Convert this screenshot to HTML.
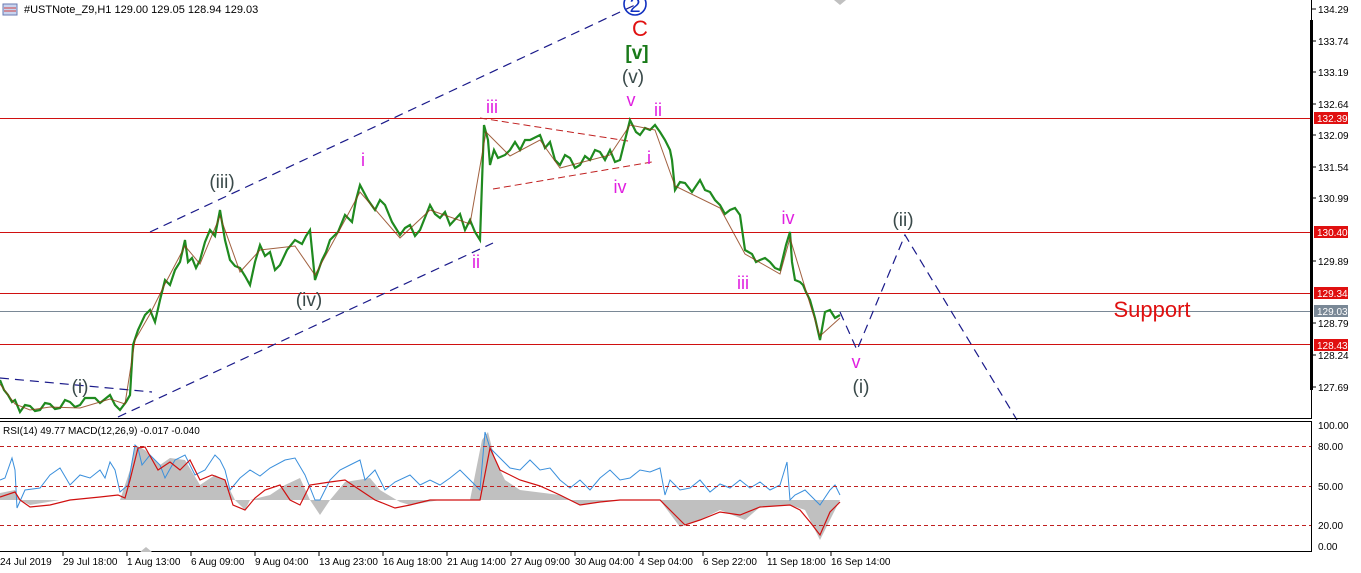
<!DOCTYPE html>
<html><head><meta charset="utf-8"><style>
body{margin:0;background:#fff;width:1361px;height:573px;overflow:hidden;font-family:"Liberation Sans",sans-serif}
svg{display:block}
text{font-family:"Liberation Sans",sans-serif}
</style></head><body>
<svg width="1361" height="573" viewBox="0 0 1361 573">
<rect width="1361" height="573" fill="#fff"/>
<rect x="3" y="4" width="14" height="11" fill="#c8d4f0" stroke="#6a7ab0"/>
<line x1="4" y1="8" x2="16" y2="8" stroke="#d04040"/><line x1="4" y1="11" x2="16" y2="11" stroke="#d04040"/>
<text x="24" y="13" font-size="11" fill="#000">#USTNote_Z9,H1  129.00 129.05 128.94 129.03</text>

<line x1="0" y1="118.5" x2="1311" y2="118.5" stroke="#d01010"/>
<line x1="0" y1="232.5" x2="1311" y2="232.5" stroke="#d01010"/>
<line x1="0" y1="293.5" x2="1311" y2="293.5" stroke="#d01010"/>
<line x1="0" y1="311.5" x2="1311" y2="311.5" stroke="#7a8896"/>
<line x1="0" y1="344.5" x2="1311" y2="344.5" stroke="#d01010"/>

<g stroke="#1a1a8a" stroke-width="1.2" stroke-dasharray="9,6" fill="none">
<line x1="150" y1="232" x2="635" y2="5"/>
<line x1="118" y1="417" x2="493" y2="243"/>
<line x1="0" y1="378" x2="152" y2="392"/>
<polyline points="840,312 857,350 905,235 1017,420"/>
</g>
<g stroke="#c02020" stroke-width="1" stroke-dasharray="7,4" fill="none">
<line x1="480" y1="118" x2="628" y2="141"/>
<line x1="493" y1="189" x2="652" y2="162"/>
</g>

<polyline fill="none" stroke="#1f8a1f" stroke-width="2.2" points="0,380 4,390 8,395 12,402 15,400 20,412 25,405 30,406 35,411 40,410 45,403 50,404 55,409 60,408 65,400 70,402 75,407 80,405 85,398 95,398 100,403 110,395 115,405 120,410 126,402 130,395 133,345 138,330 145,315 150,310 155,322 160,300 165,280 170,285 175,270 180,262 185,240 188,262 192,258 196,268 200,260 205,242 210,230 215,236 220,210 225,240 230,260 235,266 240,268 245,276 250,285 255,262 260,245 265,256 270,252 275,270 280,265 287,250 295,240 302,244 306,236 310,230 315,280 322,260 326,252 330,240 338,232 345,215 352,222 356,200 360,185 368,200 375,210 380,200 385,205 392,222 400,235 405,228 410,225 415,236 420,230 430,205 435,214 440,218 445,212 450,225 460,214 465,230 470,220 475,232 480,240 484,125 488,140 490,165 494,150 498,158 505,155 510,150 515,142 520,150 525,140 530,140 540,135 545,148 550,142 555,160 560,165 565,155 570,158 575,168 580,165 585,156 590,160 595,150 600,152 605,160 610,150 615,162 620,160 625,140 630,120 636,132 640,135 645,128 650,130 655,125 660,132 665,140 670,150 672,160 675,190 680,182 685,183 692,192 700,180 705,190 710,192 715,200 720,205 725,214 730,210 735,208 740,215 745,250 752,254 756,262 760,260 765,258 770,262 775,268 780,270 786,245 790,232 792,262 795,280 800,282 803,285 806,292 810,300 815,318 820,340 825,312 830,310 835,318 840,315"/>
<polyline fill="none" stroke="#8a3a10" stroke-width="1" opacity="0.8" points="0,384 15,404 30,410 50,407 80,408 110,399 125,404 135,340 150,314 165,284 185,246 200,264 220,216 240,272 260,250 295,246 315,275 345,220 360,192 400,238 430,210 470,224 486,132 510,156 540,140 560,168 610,155 630,125 655,130 675,186 720,208 745,254 780,274 790,238 810,304 820,336 840,318"/>

<g font-size="19" fill="#3a4a4a" text-anchor="middle">
<text x="222" y="188">(iii)</text>
<text x="309" y="306">(iv)</text>
<text x="80" y="393">(i)</text>
<text x="633" y="83">(v)</text>
<text x="903" y="226">(ii)</text>
<text x="861" y="393">(i)</text>
</g>
<g font-size="18" fill="#e020e0" text-anchor="middle">
<text x="363" y="166">i</text>
<text x="492" y="113">iii</text>
<text x="476" y="268">ii</text>
<text x="620" y="193">iv</text>
<text x="631" y="106">v</text>
<text x="658" y="116">ii</text>
<text x="649" y="164">i</text>
<text x="788" y="224">iv</text>
<text x="743" y="289">iii</text>
<text x="856" y="368">v</text>
</g>
<text x="637" y="59" font-size="19" fill="#1a7a1a" text-anchor="middle" font-weight="bold">[v]</text>
<text x="640" y="36" font-size="22" fill="#e01010" text-anchor="middle">C</text>
<circle cx="635" cy="4" r="11" fill="none" stroke="#1030c0" stroke-width="1.6"/>
<text x="635" y="12" font-size="20" fill="#1030c0" text-anchor="middle">2</text>
<text x="1152" y="317" font-size="22" fill="#e01010" text-anchor="middle">Support</text>
<polygon points="834,0 840,5 846,0" fill="#c0c0c0"/>

<line x1="1311.5" y1="0" x2="1311.5" y2="419" stroke="#000"/>
<line x1="0" y1="418.5" x2="1311" y2="418.5" stroke="#000"/>
<rect x="1310" y="20" width="3" height="370" fill="#000"/>
<g font-size="10" fill="#000">
<g stroke="#000"><line x1="1312" y1="9" x2="1316" y2="9"/><line x1="1312" y1="41" x2="1316" y2="41"/><line x1="1312" y1="72" x2="1316" y2="72"/><line x1="1312" y1="104" x2="1316" y2="104"/><line x1="1312" y1="135" x2="1316" y2="135"/><line x1="1312" y1="167" x2="1316" y2="167"/><line x1="1312" y1="198" x2="1316" y2="198"/><line x1="1312" y1="261" x2="1316" y2="261"/><line x1="1312" y1="323" x2="1316" y2="323"/><line x1="1312" y1="355" x2="1316" y2="355"/><line x1="1312" y1="387" x2="1316" y2="387"/></g>
<text x="1318" y="13">134.29</text><text x="1318" y="45">133.74</text><text x="1318" y="76">133.19</text><text x="1318" y="108">132.64</text><text x="1318" y="139">132.09</text><text x="1318" y="171">131.54</text><text x="1318" y="202">130.99</text><text x="1318" y="265">129.89</text><text x="1318" y="327">128.79</text><text x="1318" y="359">128.24</text><text x="1318" y="391">127.69</text>
</g>
<g font-size="10" fill="#fff">
<rect x="1314" y="112" width="34" height="12" fill="#e01010"/><text x="1317" y="122">132.39</text>
<rect x="1314" y="226" width="34" height="12" fill="#e01010"/><text x="1317" y="236">130.40</text>
<rect x="1314" y="287" width="34" height="12" fill="#e01010"/><text x="1317" y="297">129.34</text>
<rect x="1314" y="305" width="34" height="12" fill="#7a8896"/><text x="1317" y="315">129.03</text>
<rect x="1314" y="339" width="34" height="12" fill="#e01010"/><text x="1317" y="349">128.43</text>
</g>

<line x1="0" y1="421.5" x2="1311" y2="421.5" stroke="#000"/>
<line x1="0" y1="551.5" x2="1311" y2="551.5" stroke="#000"/>
<line x1="1311.5" y1="421" x2="1311.5" y2="552" stroke="#000"/>
<text x="3" y="434" font-size="10" fill="#000">RSI(14) 49.77 MACD(12,26,9) -0.017 -0.040</text>
<path fill="#c0c0c0" d="M0,500 L0,493 15,490 20,500 30,505 60,500 120,500 130,470 135,445 145,450 160,465 170,458 185,460 200,485 215,475 225,480 235,500 245,510 250,500 270,495 285,485 300,478 310,500 320,515 330,500 345,482 370,478 380,490 400,502 410,505 440,500 470,500 482,440 488,432 495,460 505,480 520,490 560,495 580,505 620,500 660,500 665,507 680,527 700,520 720,510 745,520 760,507 790,505 805,510 820,540 830,520 840,500 Z"/>
<polyline fill="none" stroke="#3a8fdc" stroke-width="1" points="0,480 5,478 12,458 15,470 17,508 25,490 40,488 50,475 60,468 70,485 80,475 90,478 100,470 105,478 110,462 115,470 120,492 128,485 135,445 138,448 142,465 150,455 160,465 165,478 175,460 185,455 195,475 205,470 215,455 220,460 225,470 230,490 240,478 250,470 260,476 270,468 285,460 295,458 305,475 315,500 320,500 330,480 340,470 350,465 360,460 365,480 375,470 380,480 385,490 395,482 410,475 420,485 430,480 440,485 450,478 460,470 470,480 480,490 485,432 490,448 500,458 510,468 520,470 530,460 540,470 550,468 560,480 570,488 580,480 590,490 600,478 610,470 620,480 630,478 640,470 650,472 660,468 665,495 670,480 680,490 690,488 700,480 710,492 720,484 730,488 740,480 750,488 760,482 770,490 780,485 787,462 790,500 795,495 805,490 815,500 820,505 830,490 835,485 840,495"/>
<polyline fill="none" stroke="#d01010" stroke-width="1.2" points="0,497 15,492 20,500 30,507 50,505 70,500 100,497 118,495 125,498 130,480 138,448 145,447 158,470 170,462 180,470 190,460 200,480 212,475 225,480 233,505 245,510 255,498 265,490 280,485 290,500 300,505 310,485 330,482 345,480 360,490 375,500 395,508 410,505 430,500 470,500 480,500 490,448 500,470 520,480 540,486 560,495 580,505 600,502 620,500 640,500 660,500 670,510 685,525 700,520 720,512 740,515 760,507 790,505 800,510 810,522 820,535 830,512 840,502"/>
<g stroke="#c02020" stroke-dasharray="4,3">
<line x1="0" y1="446.5" x2="1311" y2="446.5"/><line x1="0" y1="486.5" x2="1311" y2="486.5"/><line x1="0" y1="525.5" x2="1311" y2="525.5"/>
</g>
<g font-size="10" fill="#000" stroke="none">
<text x="1318" y="429">100.00</text><text x="1318" y="450">80.00</text><text x="1318" y="490">50.00</text><text x="1318" y="529">20.00</text><text x="1318" y="550">0.00</text>
</g>
<polygon points="140,552 146,547 152,552" fill="#c0c0c0"/>
<g font-size="10" fill="#000">
<text x="0" y="565">24 Jul 2019</text>
<text x="63" y="565">29 Jul 18:00</text>
<text x="127" y="565">1 Aug 13:00</text>
<text x="191" y="565">6 Aug 09:00</text>
<text x="255" y="565">9 Aug 04:00</text>
<text x="319" y="565">13 Aug 23:00</text>
<text x="383" y="565">16 Aug 18:00</text>
<text x="447" y="565">21 Aug 14:00</text>
<text x="511" y="565">27 Aug 09:00</text>
<text x="575" y="565">30 Aug 04:00</text>
<text x="639" y="565">4 Sep 04:00</text>
<text x="703" y="565">6 Sep 22:00</text>
<text x="767" y="565">11 Sep 18:00</text>
<text x="831" y="565">16 Sep 14:00</text>
</g>
<g stroke="#000"><line x1="63" y1="552" x2="63" y2="556"/><line x1="127" y1="552" x2="127" y2="556"/><line x1="191" y1="552" x2="191" y2="556"/><line x1="255" y1="552" x2="255" y2="556"/><line x1="319" y1="552" x2="319" y2="556"/><line x1="383" y1="552" x2="383" y2="556"/><line x1="447" y1="552" x2="447" y2="556"/><line x1="511" y1="552" x2="511" y2="556"/><line x1="575" y1="552" x2="575" y2="556"/><line x1="639" y1="552" x2="639" y2="556"/><line x1="703" y1="552" x2="703" y2="556"/><line x1="767" y1="552" x2="767" y2="556"/><line x1="831" y1="552" x2="831" y2="556"/></g>
</svg>
</body></html>
